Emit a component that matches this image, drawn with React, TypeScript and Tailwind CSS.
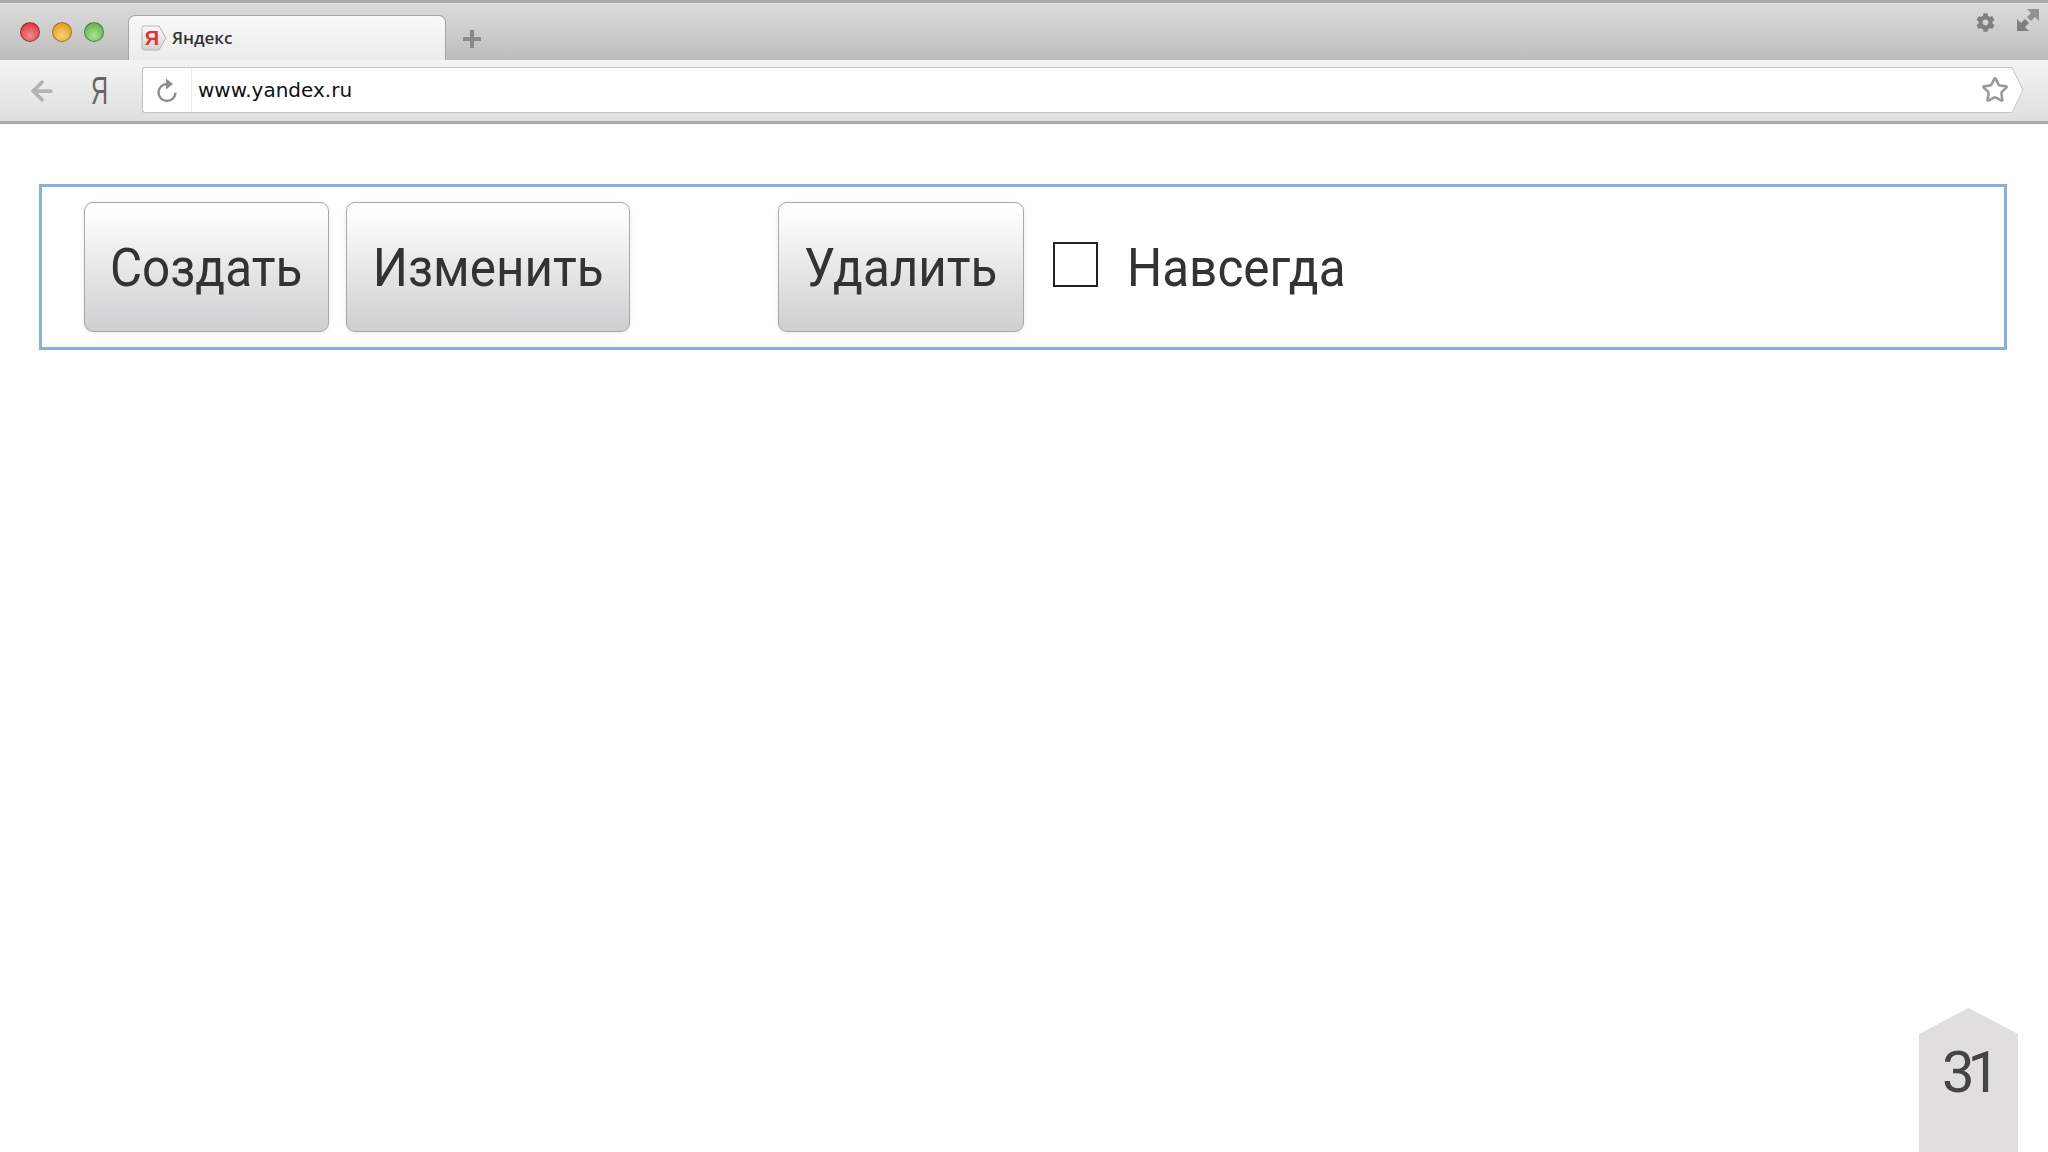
import { ArrowLeft, Star } from 'lucide-react'
import { FaCog } from 'react-icons/fa'

function TrafficLight({ className }: { className: string }) {
  return <span className={`h-[20px] w-[20px] rounded-full border border-[#00000050] ${className}`} />
}

function YandexFavicon() {
  return (
    <svg width="26" height="26" viewBox="0 0 26 26" className="shrink-0">
      <defs>
        <linearGradient id="fav" x1="0" y1="0" x2="0" y2="1">
          <stop offset="0" stopColor="#fafafa" />
          <stop offset="1" stopColor="#d4d4d4" />
        </linearGradient>
      </defs>
      <path d="M3 1h15l7 12-7 12H3a2 2 0 0 1-2-2V3a2 2 0 0 1 2-2z" fill="url(#fav)" stroke="#b5b5b5" />
      <text x="11" y="20" textAnchor="middle" fontSize="20" fontWeight="700" fill="#e0352b" fontFamily="'Liberation Sans', sans-serif">
        Я
      </text>
    </svg>
  )
}

function ReloadIcon() {
  return (
    <svg width="24" height="26" viewBox="0 0 24 26" className="text-[#8d8d8d]">
      <path d="M12 7a8.5 8.5 0 1 0 8.5 8.5" fill="none" stroke="currentColor" strokeWidth="2.4" />
      <path d="M11 1.5l7 5.5-7 5.5z" fill="currentColor" />
    </svg>
  )
}

function ExpandIcon() {
  return (
    <svg width="24" height="24" viewBox="0 0 24 24" className="text-[#808080]">
      <path d="M11 1h12v12l-4-4-4 4-4-4 4-4z" fill="currentColor" opacity="0.8" />
      <path d="M1 11v12h12l-4-4 4-4-4-4-4 4z" fill="currentColor" />
    </svg>
  )
}

function ActionButton({ label, width }: { label: string; width: string }) {
  return (
    <button
      className={`flex h-[130px] items-center justify-center rounded-[9px] border border-[#a9a8a8] bg-gradient-to-b from-[#fefefe] from-[8%] to-[#cfced0] font-['Roboto',sans-serif] text-[54px] leading-none text-[#333333] shadow-[0_1px_4px_rgba(0,0,0,0.08)] ${width}`}
    >
      <span className="mt-[2px] scale-x-[0.915]">{label}</span>
    </button>
  )
}

export default function App() {
  return (
    <div className="flex h-[1152px] w-[2048px] flex-col overflow-hidden bg-[#fefefe] font-['Roboto','Open_Sans',sans-serif]">
      {/* tab strip */}
      <div className="flex h-[60px] items-end border-t-[3px] border-[#a9a9a9] bg-gradient-to-b from-[#dcdcdc] to-[#bdbdbd]">
        <div className="flex h-full w-[128px] items-center gap-[12px] pl-[20px]">
          <TrafficLight className="bg-[radial-gradient(circle_at_50%_70%,#f58a8a,#d8262b)]" />
          <TrafficLight className="bg-[radial-gradient(circle_at_50%_70%,#fbd26f,#e08f12)]" />
          <TrafficLight className="bg-[radial-gradient(circle_at_50%_70%,#a9e58e,#4fa63a)]" />
        </div>
        <div className="flex h-[45px] w-[318px] items-center gap-[5px] rounded-t-[7px] border border-b-0 border-[#a6a6a6] bg-gradient-to-b from-[#f8f8f8] to-[#ececec] pl-[12px]">
          <YandexFavicon />
          <span className="font-['Open_Sans',sans-serif] text-[17px] font-semibold text-[#333333]">Яндекс</span>
        </div>
        <span className="relative mb-[12px] ml-[17px] block h-[18px] w-[18px]">
          <span className="absolute left-[7px] top-0 h-[18px] w-[4px] bg-[#8b8b8b]" />
          <span className="absolute left-0 top-[7px] h-[4px] w-[18px] bg-[#8b8b8b]" />
        </span>
        <div className="ml-auto flex items-start gap-[21px] self-start pr-[8px] pt-[5px]">
          <FaCog className="mt-[5px] text-[19px] text-[#808080]" />
          <ExpandIcon />
        </div>
      </div>

      {/* toolbar */}
      <div className="flex h-[64px] items-center border-b-[3px] border-[#ababab] bg-gradient-to-b from-[#f4f4f4] to-[#dfdfdf] pb-[1px]">
        <ArrowLeft size={30} strokeWidth={3} className="ml-[27px] mt-[2px] text-[#b3b3b3]" />
        <span className="ml-[34px] mt-[2px] w-[51px] origin-left scale-x-[0.62] font-['Liberation_Sans',sans-serif] text-[38px] leading-none text-[#666666]">Я</span>
        <div className="flex h-[46px] w-[1882px] items-stretch">
          <div className="flex flex-1 items-center rounded-l-[3px] border-y border-l border-[#c4c4c4] bg-white">
            <div className="flex h-full w-[49px] items-center justify-center border-r border-[#ededed]">
              <ReloadIcon />
            </div>
            <span className="ml-[6px] font-['DejaVu_Sans',sans-serif] text-[20px] text-[#111111]">www.yandex.ru</span>
            <Star size={28} strokeWidth={2.2} className="ml-auto mr-[2px] text-[#9a9a9a]" />
          </div>
          <svg width="13" height="46" viewBox="0 0 13 46" className="shrink-0">
            <path d="M0 .5h1L12 23 1 45.5H0" fill="#ffffff" stroke="#c4c4c4" />
          </svg>
        </div>
      </div>

      {/* content */}
      <div className="ml-[39px] mt-[60px] flex h-[166px] w-[1968px] items-center border-[3px] border-[#85b2d8] pl-[42px]">
        <ActionButton label="Создать" width="w-[245px]" />
        <div className="w-[17px]" />
        <ActionButton label="Изменить" width="w-[284px]" />
        <div className="w-[148px]" />
        <ActionButton label="Удалить" width="w-[246px]" />
        <span className="mb-[5px] ml-[29px] h-[45px] w-[45px] border-2 border-[#222222]" />
        <span className="ml-[29px] mt-[2px] origin-left scale-x-[0.915] text-[54px] leading-none text-[#333333]">Навсегда</span>
      </div>

      {/* slide number */}
      <div className="absolute left-[1919px] top-[1008px] flex h-[144px] w-[99px] items-start justify-center bg-[#e0dfde] pr-[2px] pt-[35px] [clip-path:polygon(50%_0,100%_26px,100%_100%,0_100%,0_26px)]">
        <span className="font-['Roboto',sans-serif] text-[58px] leading-none tracking-[-7px] text-[#444444]">31</span>
      </div>
    </div>
  )
}
